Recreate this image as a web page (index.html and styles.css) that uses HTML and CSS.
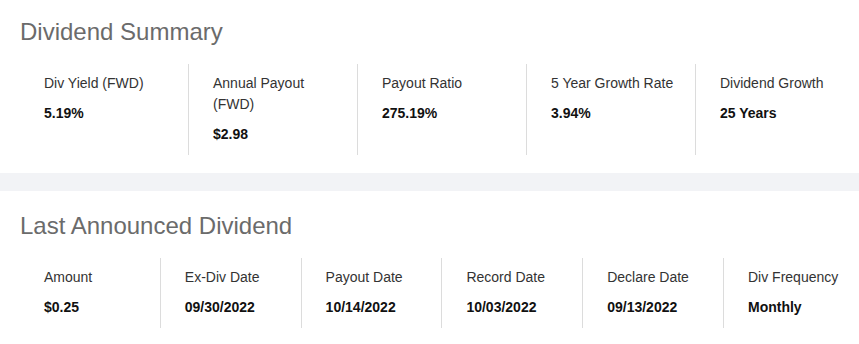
FILE: index.html
```html
<!DOCTYPE html>
<html>
<head>
<meta charset="utf-8">
<link rel="stylesheet" href="styles.css">
</head>
<body>
<section class="panel panel-summary">
  <h2 class="title">Dividend Summary</h2>
  <div class="stats stats-5">
    <div class="stat"><div class="label">Div Yield (FWD)</div><div class="value">5.19%</div></div>
    <div class="stat"><div class="label">Annual Payout<br>(FWD)</div><div class="value">$2.98</div></div>
    <div class="stat"><div class="label">Payout Ratio</div><div class="value">275.19%</div></div>
    <div class="stat"><div class="label">5 Year Growth Rate</div><div class="value">3.94%</div></div>
    <div class="stat"><div class="label">Dividend Growth</div><div class="value">25 Years</div></div>
  </div>
</section>
<div class="band"></div>
<section class="panel panel-last">
  <h2 class="title">Last Announced Dividend</h2>
  <div class="stats stats-6">
    <div class="stat"><div class="label">Amount</div><div class="value">$0.25</div></div>
    <div class="stat"><div class="label">Ex-Div Date</div><div class="value">09/30/2022</div></div>
    <div class="stat"><div class="label">Payout Date</div><div class="value">10/14/2022</div></div>
    <div class="stat"><div class="label">Record Date</div><div class="value">10/03/2022</div></div>
    <div class="stat"><div class="label">Declare Date</div><div class="value">09/13/2022</div></div>
    <div class="stat"><div class="label">Div Frequency</div><div class="value">Monthly</div></div>
  </div>
</section>
</body>
</html>
```
FILE: styles.css
```css
html, body {
  margin: 0;
  padding: 0;
  background: #ffffff;
  overflow: hidden;
  font-family: "Liberation Sans", Arial, sans-serif;
}
.panel {
  padding: 18px 0 18px 20px;
}
.panel-last {
  padding-top: 21px;
}
.title {
  margin: 0;
  font-size: 24px;
  line-height: 28px;
  font-weight: 400;
  color: #6b6b6b;
}
.stats {
  display: grid;
  width: 845px;
  margin-top: 18px;
}
.stats-5 { grid-template-columns: repeat(5, 169px); }
.stats-6 { grid-template-columns: repeat(6, 140.8px); }
.stat {
  box-sizing: border-box;
  padding: 9px 8px 10px 24px;
  border-right: 1px solid #dcdcdc;
}
.label {
  font-size: 14px;
  line-height: 21px;
  color: #333333;
}
.value {
  margin-top: 9px;
  font-size: 14px;
  line-height: 21px;
  font-weight: 700;
  color: #111111;
}
.band {
  height: 18px;
  background: #f2f3f6;
}
```
